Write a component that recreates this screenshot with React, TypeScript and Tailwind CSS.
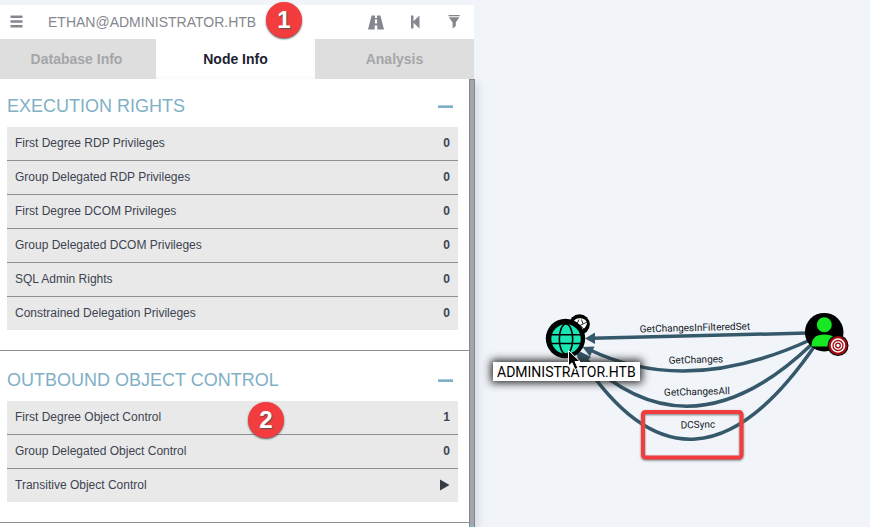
import { useState } from 'react';

type Row = { label: string; value?: string };

const executionRights: Row[] = [
  { label: 'First Degree RDP Privileges', value: '0' },
  { label: 'Group Delegated RDP Privileges', value: '0' },
  { label: 'First Degree DCOM Privileges', value: '0' },
  { label: 'Group Delegated DCOM Privileges', value: '0' },
  { label: 'SQL Admin Rights', value: '0' },
  { label: 'Constrained Delegation Privileges', value: '0' },
];

const outboundControl: Row[] = [
  { label: 'First Degree Object Control', value: '1' },
  { label: 'Group Delegated Object Control', value: '0' },
  { label: 'Transitive Object Control' },
];

const tabs = ['Database Info', 'Node Info', 'Analysis'];

function Section({ title, rows }: { title: string; rows: Row[] }) {
  const [open, setOpen] = useState(true);
  return (
    <section className="border-b border-[#8e9097] pt-[15px] pb-5 pl-[7px] pr-[11px]">
      <div className="flex h-7 items-center justify-between pr-[5px]">
        <h2 className="text-lg leading-7 text-[#7fb0c6]">{title}</h2>
        <button
          type="button"
          aria-label={`Toggle ${title}`}
          aria-expanded={open}
          onClick={() => setOpen(!open)}
          className="flex h-5 w-[15px] items-center"
        >
          <span className="h-[3px] w-full border-t border-[#a5c8d8] bg-[#7fb0c6]" />
        </button>
      </div>
      {open && (
        <table className="mt-[7px] w-full border-separate border-spacing-0 bg-[#e9e9e9] text-xs text-[#3d4451]">
          <tbody className="[&>tr>*]:border-b [&>tr>*]:border-[#8e9097] [&>tr:last-child>*]:border-b-0">
            {rows.map((row) => (
              <tr key={row.label} className="h-[34px] last:h-[33px]">
                <th scope="row" className="pb-0.5 pl-2 text-left font-normal">
                  {row.label}
                </th>
                <td className="pr-2 pb-0.5 text-right font-bold">
                  {row.value ?? (
                    <button type="button" aria-label={`Run ${row.label}`} className="ml-auto block">
                      <svg width="10" height="12" viewBox="0 0 10 12" fill="#353c49">
                        <path d="M0 0.500 9.500 6 0 11.500z" />
                      </svg>
                    </button>
                  )}
                </td>
              </tr>
            ))}
          </tbody>
        </table>
      )}
    </section>
  );
}

function Header() {
  const [query, setQuery] = useState('ETHAN@ADMINISTRATOR.HTB');
  return (
    <header className="flex h-[34px] items-center bg-white pl-2.5 pr-3.5 text-[#85878e]">
      <button type="button" aria-label="Menu" className="mr-[25px]">
        <svg width="13" height="14" viewBox="0 0 13 14" fill="currentColor">
          <path d="M0.500 0.500h12v2.500h-12zM0.500 5.200h12v2.500h-12zM0.500 9.900h12v2.500h-12z" />
        </svg>
      </button>
      <input
        aria-label="Search for a node"
        value={query}
        onChange={(e) => setQuery(e.target.value)}
        className="min-w-0 flex-1 bg-transparent text-sm outline-none"
      />
      <div className="flex items-center gap-[27px]">
        <button type="button" aria-label="Pathfinding">
          <svg width="16" height="15" viewBox="0 0 16 15" fill="currentColor">
            <path
              fillRule="evenodd"
              d="M3.600 0.500H7V3H9V0.500H12.400L16 14.500H9.300V10.500H6.700V14.500H0zM6.900 4.500V8.500H9.100V4.500z"
            />
          </svg>
        </button>
        <button type="button" aria-label="Back">
          <svg width="10" height="14" viewBox="0 0 10 14" fill="currentColor">
            <path d="M0 0.500h2.500v5.800L8.500 0.500v13L2.500 7.700v5.800h-2.500z" />
          </svg>
        </button>
        <button type="button" aria-label="Filter edges">
          <svg width="12" height="14" viewBox="0 0 12 14" fill="currentColor">
            <path d="M0.500 0h11.200v1.200H0.500zM0.800 2.200h10.600L7.800 7.500V11L4.600 13.500v-6z" />
          </svg>
        </button>
      </div>
    </header>
  );
}

function Badge({ text, className }: { text: string; className: string }) {
  return (
    <span
      className={`absolute flex size-9 items-center justify-center rounded-full bg-[#f23c3e] text-2xl font-bold text-white shadow-[0_1px_2px_#555] [text-shadow:1px_1px_1px_#555] ${className}`}
    >
      {text}
    </span>
  );
}

function Graph() {
  return (
    <svg
      className="absolute left-0 top-0 font-[Roboto,sans-serif]"
      width="395"
      height="527"
      viewBox="475 0 395 527"
      role="img"
      aria-label="Attack paths"
    >
      <g fill="none" stroke="#35586a" strokeWidth="3.500">
        <path d="M592 338.300L808 333" />
        <path d="M588 349Q686 397 810 340" />
        <path d="M584 358Q690 461 812 344" />
        <path d="M582 360Q692 526 816 344" />
      </g>
      <g fill="#35586a">
        <path d="M585 338.500L595 332.500V344z" />
        <path d="M582.500 347L594.500 346.500L590 356.500z" />
        <path d="M579 351L591 357L583 364z" />
        <path d="M576 351L589 359L580 367z" />
      </g>
      <g fontSize="10" fill="#15181c" textAnchor="middle">
        <text x="695" y="331" transform="rotate(-1.500 695 331)">GetChangesInFilteredSet</text>
        <text x="696" y="363" transform="rotate(-1.500 696 363)">GetChanges</text>
        <text x="697" y="395" transform="rotate(-1.500 697 395)">GetChangesAll</text>
        <text x="698" y="428" transform="rotate(-1.500 698 428)">DCSync</text>
      </g>

      <circle cx="579.500" cy="324.500" r="10.300" fill="#000" />
      <path d="M573 322.500C574.500 317.500 584.500 316.500 587 322.500C587 325 585 328.500 582 330z" fill="#fff" />
      <path
        d="M573 322.500L580 325.500L587 322M577 324L579 319.500M583 324L581.500 319.500M580 325.500L584 329"
        fill="none"
        stroke="#000"
        strokeWidth="0.800"
      />
      <circle cx="565.500" cy="338.500" r="19.700" fill="#000" />
      <circle cx="566" cy="339" r="14.700" fill="#17e8b5" />
      <g fill="none" stroke="#000" strokeWidth="1.600">
        <ellipse cx="566" cy="339" rx="6.700" ry="15" />
        <path d="M551 334.800H581M551 343.500H581" />
      </g>

      <circle cx="824.200" cy="332.200" r="19.300" fill="#000" />
      <circle cx="824.300" cy="324.800" r="7.500" fill="#17e823" />
      <path d="M811.500 346.500C811.500 338 816 334.500 824.500 334.500S837 338 837 346.500z" fill="#17e823" />
      <circle cx="838" cy="345.500" r="10.500" fill="#000" />
      <circle cx="838" cy="345.500" r="9.500" fill="#a00c10" />
      <circle cx="838" cy="345.500" r="7.200" fill="#fff" />
      <g fill="none" stroke="#a00c10" strokeWidth="1.300">
        <circle cx="838" cy="345.500" r="5" />
        <circle cx="838" cy="345.500" r="2.300" />
      </g>
      <rect
        x="643"
        y="412"
        width="98.500"
        height="45.500"
        rx="2.500"
        fill="none"
        stroke="#f23c3e"
        strokeWidth="4"
        className="drop-shadow-[0_1px_1px_#777]"
      />
    </svg>
  );
}

export default function App() {
  const [active, setActive] = useState('Node Info');
  return (
    <div className="relative flex h-screen overflow-hidden bg-[#f1f5fa] font-['Liberation_Sans',Arial,sans-serif]">
      <aside className="flex w-[475px] shrink-0 flex-col pt-[5px]">
        <div className="mr-px">
          <Header />
          <nav className="-ml-[3px] grid grid-cols-3">
            {tabs.map((tab) => (
              <button
                key={tab}
                type="button"
                onClick={() => setActive(tab)}
                className={`h-10 text-sm font-bold ${
                  active === tab ? 'bg-white text-[#1d2230]' : 'bg-[#dedede] text-[#a5a6a9]'
                }`}
              >
                {tab}
              </button>
            ))}
          </nav>
        </div>
        <div className="flex min-h-0 flex-1 shadow-[3px_4px_8px_#d3d8df]">
          <div className="min-w-0 flex-1 overflow-hidden bg-white">
            <div className="-mt-0.5">
              <Section title="EXECUTION RIGHTS" rows={executionRights} />
              <Section title="OUTBOUND OBJECT CONTROL" rows={outboundControl} />
            </div>
          </div>
          <div className="flex w-1.5 flex-col justify-end border-x border-t border-[#85878d] bg-[#a4a6ac]">
            <div className="h-0.5 bg-[#7fc0c8]" />
          </div>
        </div>
      </aside>
      <main className="relative min-w-0 flex-1">
        <Graph />
        <div className="absolute left-[18px] top-[362px] bg-white px-1 pt-0.5 font-[Roboto,sans-serif] text-sm leading-[17px] text-black shadow-[0_0_8px_2px_#222]">
          ADMINISTRATOR.HTB
        </div>
        <svg className="absolute left-[92px] top-[349px]" width="15" height="22" viewBox="0 0 15 22">
          <path
            d="M1.500 1.500V17L5 13.800L8 20.500L11 19.200L8 12.500H13z"
            fill="#000"
            stroke="#fff"
            strokeWidth="1"
          />
        </svg>
      </main>
      <Badge text="1" className="left-[266px] top-0.5" />
      <Badge text="2" className="left-[248px] top-[402px]" />
    </div>
  );
}
